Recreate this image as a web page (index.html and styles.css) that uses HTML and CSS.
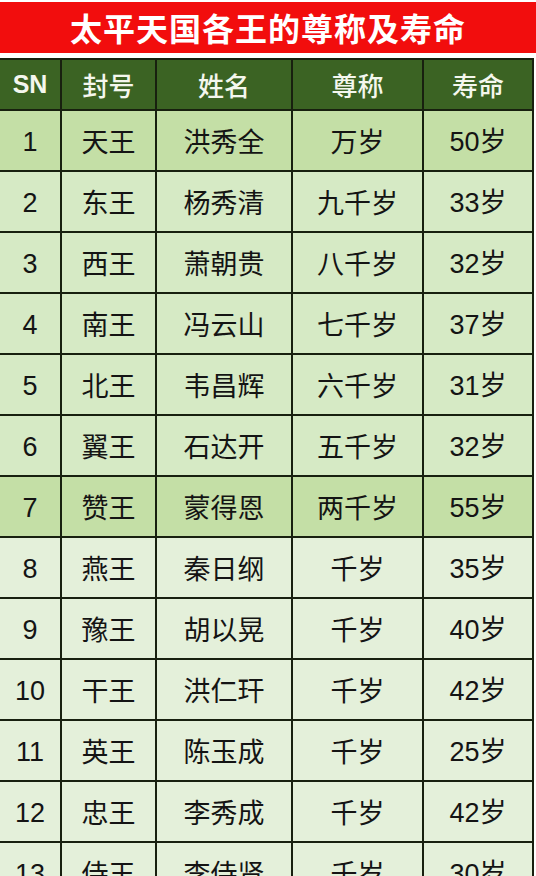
FILE: index.html
```html
<!DOCTYPE html>
<html lang="zh">
<head>
<meta charset="utf-8">
<link rel="stylesheet" href="styles.css">
</head>
<body>
<div class="page">
  <div class="title">太平天国各王的尊称及寿命</div>
  <table class="grid">
    <colgroup>
      <col class="c1"><col class="c2"><col class="c3"><col class="c4"><col class="c5">
    </colgroup>
    <thead>
      <tr><th class="sn">SN</th><th>封号</th><th>姓名</th><th>尊称</th><th>寿命</th></tr>
    </thead>
    <tbody>
      <tr class="r1"><td class="num">1</td><td>天王</td><td>洪秀全</td><td>万岁</td><td><span class="num">50</span>岁</td></tr>
      <tr class="r2"><td class="num">2</td><td>东王</td><td>杨秀清</td><td>九千岁</td><td><span class="num">33</span>岁</td></tr>
      <tr class="r2"><td class="num">3</td><td>西王</td><td>萧朝贵</td><td>八千岁</td><td><span class="num">32</span>岁</td></tr>
      <tr class="r2"><td class="num">4</td><td>南王</td><td>冯云山</td><td>七千岁</td><td><span class="num">37</span>岁</td></tr>
      <tr class="r2"><td class="num">5</td><td>北王</td><td>韦昌辉</td><td>六千岁</td><td><span class="num">31</span>岁</td></tr>
      <tr class="r2"><td class="num">6</td><td>翼王</td><td>石达开</td><td>五千岁</td><td><span class="num">32</span>岁</td></tr>
      <tr class="r1"><td class="num">7</td><td>赞王</td><td>蒙得恩</td><td>两千岁</td><td><span class="num">55</span>岁</td></tr>
      <tr class="r3"><td class="num">8</td><td>燕王</td><td>秦日纲</td><td>千岁</td><td><span class="num">35</span>岁</td></tr>
      <tr class="r3"><td class="num">9</td><td>豫王</td><td>胡以晃</td><td>千岁</td><td><span class="num">40</span>岁</td></tr>
      <tr class="r3"><td class="num">10</td><td>干王</td><td>洪仁玕</td><td>千岁</td><td><span class="num">42</span>岁</td></tr>
      <tr class="r3"><td class="num">11</td><td>英王</td><td>陈玉成</td><td>千岁</td><td><span class="num">25</span>岁</td></tr>
      <tr class="r3"><td class="num">12</td><td>忠王</td><td>李秀成</td><td>千岁</td><td><span class="num">42</span>岁</td></tr>
      <tr class="r3"><td class="num">13</td><td>侍王</td><td>李侍贤</td><td>千岁</td><td><span class="num">30</span>岁</td></tr>
    </tbody>
  </table>
</div>
</body>
</html>
```
FILE: styles.css
```css
html, body {
  margin: 0;
  padding: 0;
  background: #ffffff;
}
.page {
  width: 536px;
  height: 876px;
  overflow: hidden;
  padding-top: 2px;
  box-sizing: border-box;
  font-family: "Noto Sans CJK SC", "Noto Sans", sans-serif;
}
.title {
  height: 51px;
  background: #f20d0d;
  color: #ffffff;
  font-size: 32px;
  font-weight: 700;
  line-height: 51px;
  text-align: center;
  letter-spacing: 1px;
}
.grid {
  margin-top: 5px;
  width: 533px;
  border-collapse: collapse;
  table-layout: fixed;
}
.c1 { width: 61px; }
.c2 { width: 95px; }
.c3 { width: 136px; }
.c4 { width: 131px; }
.c5 { width: 110px; }
.grid th, .grid td {
  border: 2px solid #18200f;
  text-align: center;
  vertical-align: middle;
  padding: 0;
}
.grid th:first-child, .grid td:first-child {
  border-left: none;
}
.grid th {
  height: 49px;
  background: #3b6323;
  color: #f4f7ee;
  font-size: 26px;
  font-weight: 500;
}
.grid th.sn {
  font-family: "Liberation Sans", Arial, sans-serif;
  font-weight: 700;
  font-size: 25px;
}
.grid td {
  height: 57px;
  color: #141414;
  font-size: 27px;
  line-height: 36px;
  font-weight: 400;
}
.num {
  font-family: "Liberation Sans", Arial, sans-serif;
  font-size: 27px;
}
.grid td.num {
  padding-top: 2px;
}
.r1 td { background: #c4dfa6; }
.r2 td { background: #d6eac5; }
.r3 td { background: #e4f0da; }
```
